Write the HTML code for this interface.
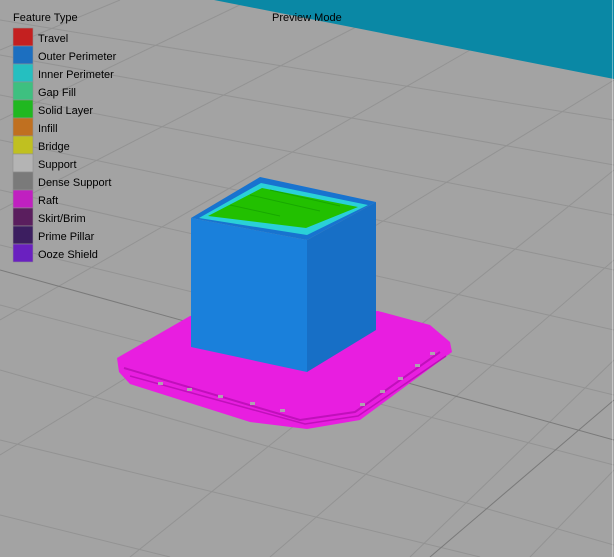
<!DOCTYPE html>
<html><head><meta charset="utf-8"><style>
html,body{margin:0;padding:0;width:614px;height:557px;overflow:hidden;background:#a3a3a3;}
svg{position:absolute;left:0;top:0}
.t{font-family:"Liberation Sans","Noto Sans CJK JP",sans-serif;font-size:11px;fill:#000}
</style></head><body>
<svg width="614" height="557" viewBox="0 0 614 557">
<rect width="614" height="557" fill="#a3a3a3"/>
<g stroke="#939393" stroke-width="1" fill="none">
<line x1="0" y1="20" x2="614" y2="120"/>
<line x1="0" y1="55" x2="614" y2="165"/>
<line x1="0" y1="95" x2="614" y2="215"/>
<line x1="0" y1="140" x2="614" y2="270"/>
<line x1="0" y1="190" x2="614" y2="330"/>
<line x1="0" y1="245" x2="614" y2="395"/>
<line x1="0" y1="305" x2="614" y2="465"/>
<line x1="0" y1="370" x2="614" y2="545"/>
<line x1="0" y1="440" x2="480" y2="557"/>
<line x1="0" y1="515" x2="170" y2="557"/>
<line x1="120" y1="0" x2="0" y2="50"/>
<line x1="250" y1="0" x2="0" y2="120"/>
<line x1="360" y1="25" x2="0" y2="210"/>
<line x1="470" y1="50" x2="0" y2="320"/>
<line x1="614" y1="80" x2="0" y2="455"/>
<line x1="614" y1="170" x2="130" y2="557"/>
<line x1="614" y1="260" x2="270" y2="557"/>
<line x1="614" y1="360" x2="410" y2="557"/>
<line x1="614" y1="470" x2="530" y2="557"/>
</g>
<line x1="0" y1="270" x2="614" y2="440" stroke="#7a7a7a"/>
<line x1="614" y1="400" x2="430" y2="557" stroke="#7a7a7a"/>
<polygon points="214,0 614,0 614,79" fill="#0a88a5"/>
<line x1="612.5" y1="0" x2="612.5" y2="557" stroke="#ffffff" stroke-width="1" opacity="0.4"/>
<!-- raft -->
<polygon points="117,358 190,316 378,311 430,325 450,342 452,352 360,420 307,429 250,422 130,384 119,372" fill="#e81ee0"/>
<polyline points="124,368 300,420 355,412 440,352" fill="none" stroke="#c010bb" stroke-width="2"/>
<polyline points="130,376 305,424 358,416 446,356" fill="none" stroke="#c010bb" stroke-width="1.5"/>
<g fill="#b0a0b0">
<rect x="158" y="382" width="5" height="3"/><rect x="187" y="388" width="5" height="3"/><rect x="218" y="395" width="5" height="3"/><rect x="250" y="402" width="5" height="3"/><rect x="280" y="409" width="5" height="3"/>
<rect x="360" y="403" width="5" height="3"/><rect x="380" y="390" width="5" height="3"/><rect x="398" y="377" width="5" height="3"/><rect x="415" y="364" width="5" height="3"/><rect x="430" y="352" width="5" height="3"/>
</g>
<!-- cube -->
<polygon points="191,218 307,240 307,372 191,347" fill="#1a80db"/>
<polygon points="307,240 376,202 376,330 307,372" fill="#176fc6"/>
<polygon points="191,218 260,177 376,202 307,240" fill="#1873cf"/>
<polygon points="199,218 261,183 368,205 307,235" fill="#2ad0d8"/>
<polygon points="208,216 262,188 358,207 306,228" fill="#22c000"/>
<g stroke="#119900" stroke-width="1" opacity="0.6">
<line x1="230" y1="205" x2="280" y2="216"/><line x1="250" y1="195" x2="320" y2="211"/><line x1="270" y1="190" x2="340" y2="206"/>
</g>
<!-- legend -->
<text class="t" x="13" y="21">Feature Type</text>
<text class="t" x="272" y="21">Preview Mode</text>
<g stroke="#909090" stroke-width="0.6">
<rect x="13" y="28" width="20" height="18" fill="#c42020"/>
<rect x="13" y="46" width="20" height="18" fill="#1c6fc0"/>
<rect x="13" y="64" width="20" height="18" fill="#25bfc0"/>
<rect x="13" y="82" width="20" height="18" fill="#3ec080"/>
<rect x="13" y="100" width="20" height="18" fill="#20b820"/>
<rect x="13" y="118" width="20" height="18" fill="#c07020"/>
<rect x="13" y="136" width="20" height="18" fill="#c0c020"/>
<rect x="13" y="154" width="20" height="18" fill="#b4b4b4"/>
<rect x="13" y="172" width="20" height="18" fill="#7a7a7a"/>
<rect x="13" y="190" width="20" height="18" fill="#c020c0"/>
<rect x="13" y="208" width="20" height="18" fill="#5a1e5e"/>
<rect x="13" y="226" width="20" height="18" fill="#3c1e60"/>
<rect x="13" y="244" width="20" height="18" fill="#6a20c0"/>
</g>
<text class="t" x="38" y="42">Travel</text>
<text class="t" x="38" y="60">Outer Perimeter</text>
<text class="t" x="38" y="78">Inner Perimeter</text>
<text class="t" x="38" y="96">Gap Fill</text>
<text class="t" x="38" y="114">Solid Layer</text>
<text class="t" x="38" y="132">Infill</text>
<text class="t" x="38" y="150">Bridge</text>
<text class="t" x="38" y="168">Support</text>
<text class="t" x="38" y="186">Dense Support</text>
<text class="t" x="38" y="204">Raft</text>
<text class="t" x="38" y="222">Skirt/Brim</text>
<text class="t" x="38" y="240">Prime Pillar</text>
<text class="t" x="38" y="258">Ooze Shield</text>
</svg>
</body></html>
